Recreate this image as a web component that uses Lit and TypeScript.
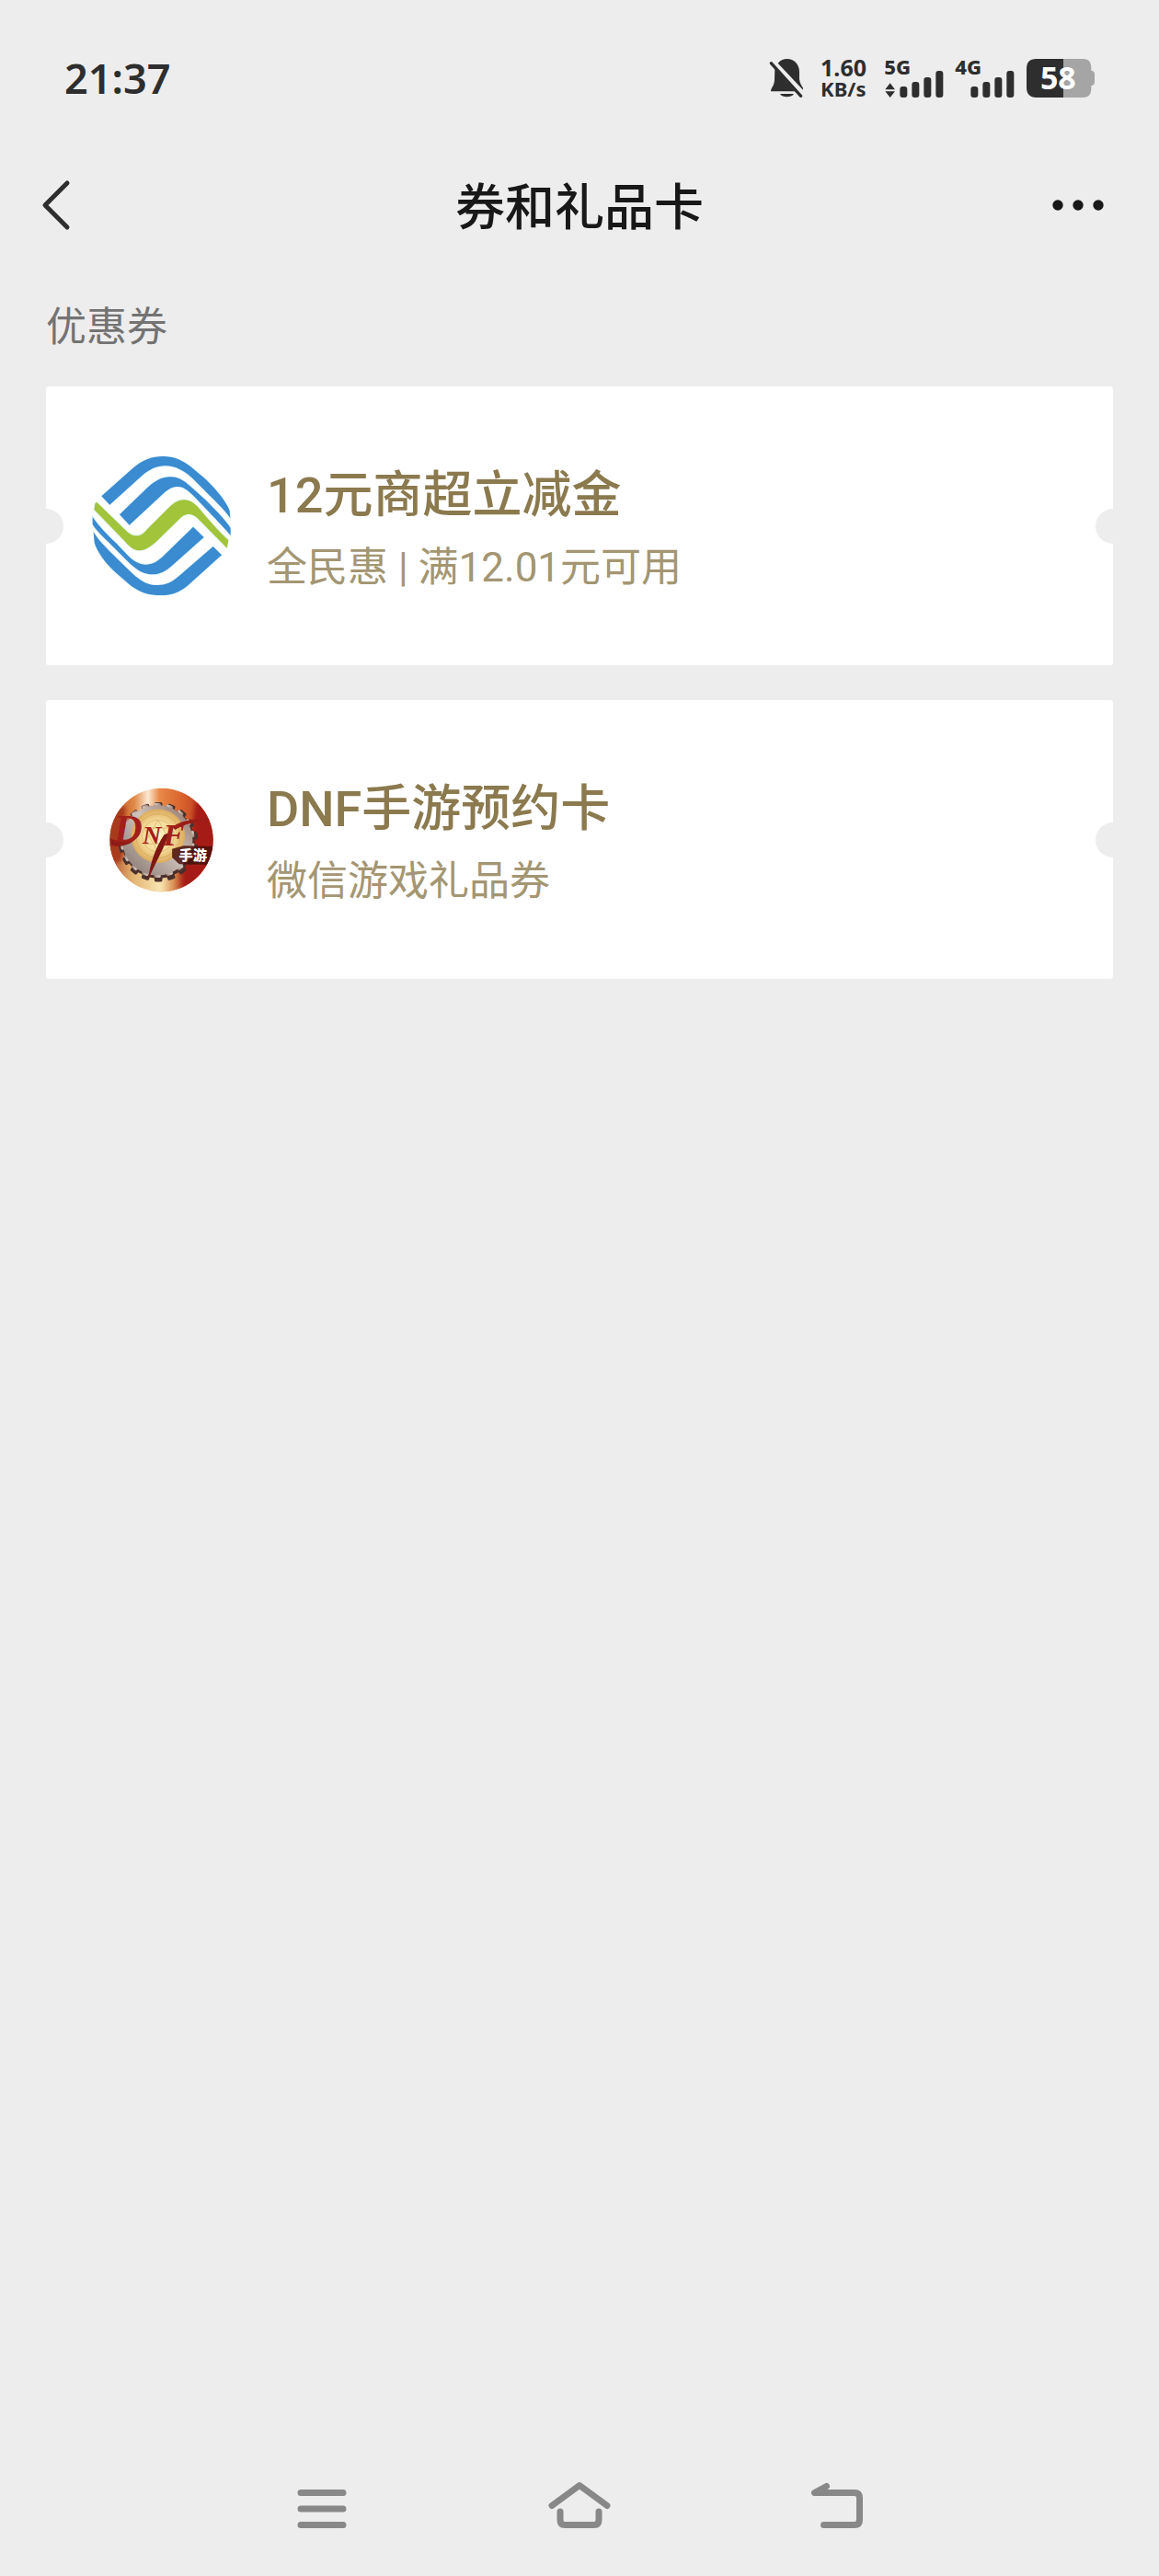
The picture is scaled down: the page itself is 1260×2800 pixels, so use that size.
import { LitElement, html, svg, css, type TemplateResult } from "lit";
import { customElement, property } from "lit/decorators.js";

interface Coupon {
  title: string;
  detail: string;
  logo: TemplateResult;
}

const chinaMobileLogo = html`
  <svg class="logo logo-large" viewBox="60 78 453 453" role="img" aria-label="中国移动">
    <g class="halo">
      <path fill="#3a8bd0" d="M91 208 L192 118 C225 88 258 78 292 78 C326 78 352 88 385 114 L432 154 C468 188 502 232 509 256 L511 280 C492 252 462 224 430 192 L388 150 C358 122 330 109 300 109 C270 109 248 120 224 140 L118 236Z"/>
      <path fill="#3a8bd0" d="M150 268 L240 181 C268 155 290 145 315 145 C340 145 358 155 380 175 L430 220 C462 252 498 288 512 312 L512 336 C496 316 470 290 440 258 L392 208 C370 186 356 177 340 177 C322 177 310 184 292 200 L182 302Z"/>
      <path fill="#a2c43a" d="M76 228 L165 314 C180 330 192 337 206 337 C220 337 228 330 240 316 L312 244 C332 224 348 219 362 220 C380 221 392 230 406 244 C440 284 470 320 505 352 L500 377 L418 294 C402 276 390 267 376 267 C362 267 352 275 342 286 L272 354 C250 375 232 385 214 385 C196 385 182 372 166 354 L67 252 L70 232Z"/>
      <path fill="#3a8bd0" d="M62 275 C80 302 108 332 140 362 L172 396 C194 420 214 431 236 431 C256 431 270 424 290 406 L390 308 L425 342 L324 432 C300 454 280 463 258 463 C230 463 210 452 182 426 L116 360 C94 338 74 320 62 300Z"/>
      <path fill="#3a8bd0" d="M65 325 C84 356 110 380 142 412 L190 458 C222 488 244 498 274 498 C300 498 318 490 344 468 L455 372 L483 400 L374 498 C344 524 318 531 288 531 C244 531 214 522 180 494 L132 452 C104 426 78 392 68 360Z"/>
    </g>
  </svg>`;

const teeth = Array.from({ length: 18 }, (_, i) => i * 20);

const dnfLogo = html`
  <svg class="logo logo-small" viewBox="57 48 340 342" role="img" aria-label="DNF手游">
    <defs>
      <clipPath id="disc"><circle cx="227" cy="219" r="169"/></clipPath>
      <linearGradient id="sky" x1="0" y1="0" x2="1" y2="0">
        <stop offset="0" stop-color="#b84a1c"/>
        <stop offset=".24" stop-color="#e08a48"/>
        <stop offset=".37" stop-color="#fbe9d2"/>
        <stop offset=".48" stop-color="#e88a48"/>
        <stop offset=".7" stop-color="#d9622c"/>
        <stop offset="1" stop-color="#a82a1a"/>
      </linearGradient>
      <linearGradient id="ground" x1="0" y1="0" x2="1" y2="0">
        <stop offset="0" stop-color="#a8341a"/>
        <stop offset=".25" stop-color="#e2b470"/>
        <stop offset=".5" stop-color="#f8e6b4"/>
        <stop offset=".62" stop-color="#d88a4c"/>
        <stop offset=".7" stop-color="#a81c14"/>
        <stop offset="1" stop-color="#8c1812"/>
      </linearGradient>
      <radialGradient id="gold">
        <stop offset="0" stop-color="#fff4c4"/>
        <stop offset=".6" stop-color="#f3d896"/>
        <stop offset="1" stop-color="#dcab5c"/>
      </radialGradient>
      <linearGradient id="steel" x1="1" y1="0" x2="0" y2="1">
        <stop offset="0" stop-color="#8d6c60"/>
        <stop offset=".45" stop-color="#cfc4bc"/>
        <stop offset="1" stop-color="#82706a"/>
      </linearGradient>
      <filter id="soft"><feGaussianBlur stdDeviation="7"/></filter>
    </defs>
    <g clip-path="url(#disc)">
      <rect x="57" y="48" width="340" height="342" fill="url(#sky)"/>
      <g filter="url(#soft)">
        <rect x="40" y="270" width="370" height="140" fill="url(#ground)"/>
        <path d="M340 90 L410 100 V350 H300 L325 190Z" fill="#a51c15"/>
        <path d="M50 110 L110 110 L100 290 L50 300Z" fill="#a83a1c"/>
      </g>
      <g fill="#4b302b">
        ${teeth.map((a) => svg`<rect x="204" y="96" width="26" height="28" rx="5" transform="rotate(${a} 217 226)"/>`)}
      </g>
      <circle cx="217" cy="226" r="119" fill="#4b302b"/>
      <g fill="url(#steel)">
        ${teeth.map((a) => svg`<rect x="203" y="98" width="22" height="26" rx="5" transform="rotate(${a} 214 220)"/>`)}
        <circle cx="214" cy="220" r="115"/>
      </g>
      <circle cx="216" cy="206" r="88" fill="url(#gold)"/>
      <circle cx="216" cy="206" r="72" fill="none" stroke="#d9ad62" stroke-width="3"/>
      <circle cx="216" cy="206" r="52" fill="none" stroke="#e0ba74" stroke-width="3"/>
      <path d="M216 154 L261 232 H171Z M216 258 L171 180 H261Z" fill="none" stroke="#e0ba74" stroke-width="3"/>
      <path d="M262 248 L300 238 L400 240 V300 L285 298 L262 276Z" fill="#4a0f0c" opacity=".85"/>
      <path d="M60 214 C100 236 144 214 160 174 C160 214 118 250 62 236Z" fill="#8e1b16"/>
      <path d="M262 176 C300 150 345 150 386 148 L380 157 C340 158 300 166 272 186Z" fill="#9c1d17"/>
      <path d="M252 196 C238 244 208 292 184 348 C190 294 208 244 236 202Z" fill="#7f1713"/>
      <text class="brush" x="72" y="226" font-size="128">D</text>
      <text class="brush" x="165" y="230" font-size="84">N</text>
      <text class="brush" x="232" y="236" font-size="104">F</text>
      <text class="game" x="284" y="286" font-size="46">手游</text>
    </g>
  </svg>`;

const coupons: Coupon[] = [
  { title: "12元商超立减金", detail: "全民惠 | 满12.01元可用", logo: chinaMobileLogo },
  { title: "DNF手游预约卡", detail: "微信游戏礼品券", logo: dnfLogo },
];

@customElement("status-bar")
class StatusBar extends LitElement {
  static styles = css`
    :host {
      display: flex;
      align-items: center;
      justify-content: space-between;
      height: 170px;
      padding: 0 70px;
      color: #2e2e2e;
      font-family: "Noto Sans", sans-serif;
    }
    .time { font-size: 45px; font-weight: 600; line-height: 64px; }
    .icons { display: flex; align-items: center; }
    .icons svg { display: block; overflow: visible; fill: currentColor; }
    .speed {
      display: flex;
      flex-direction: column;
      margin: 0 20px 0 18px;
      font-weight: 700;
      line-height: 23px;
    }
    .rate { font-size: 25px; }
    .unit { font-size: 22px; }
    .signal { margin-right: 13px; }
    .network { font-size: 66px; font-weight: 800; }
    .level { font-size: 102px; font-weight: 700; fill: #fff; }
  `;

  private signal(network: string, active: boolean) {
    return svg`
      <svg class="signal" width="64" height="42" viewBox="0 0 192 126" role="img" aria-label="${network}">
        <text class="network" x="-2" y="50">${network}</text>
        ${active ? svg`<path d="M17 79 L33 100 H1Z M1 106 H33 L17 126Z"/>` : null}
        <rect x="49" y="90" width="24" height="36" rx="9"/>
        <rect x="88" y="75" width="24" height="51" rx="9"/>
        <rect x="127" y="60" width="24" height="66" rx="9"/>
        <rect x="166" y="39" width="24" height="87" rx="9"/>
      </svg>`;
  }

  render() {
    return html`
      <span class="time">21:37</span>
      <div class="icons">
        <svg width="38" height="42" viewBox="48 72 114 126" role="img" aria-label="静音">
          <path d="M77 86 C86 76 96 72 107 72 C130 72 147 90 147 114 V138 C148 150 154 158 159 167 V173Z"/>
          <path d="M67 104 L133 178 H54 C54 168 65 160 66 142Z"/>
          <path d="M84 186 H129 C122 199 91 199 84 186Z"/>
          <path d="M55 86 L152 193" fill="none" stroke="currentColor" stroke-width="10" stroke-linecap="round"/>
        </svg>
        <span class="speed"><span class="rate">1.60</span><span class="unit">KB/s</span></span>
        ${this.signal("5G", true)}
        ${this.signal("4G", false)}
        <svg width="74" height="42" viewBox="888 72 222 126" role="img" aria-label="电量 58%">
          <path d="M1008 72 H1072 C1092 72 1099 84 1099 102 V110 C1107 111 1110 115 1110 122 V146 C1110 154 1107 158 1099 159 V168 C1099 186 1092 198 1072 198 H1008Z" fill="#a5a5a5"/>
          <path d="M1008 72 H920 C898 72 888 84 888 104 V166 C888 186 898 198 920 198 H1008Z"/>
          <text class="level" x="991" y="172" text-anchor="middle">58</text>
        </svg>
      </div>
    `;
  }
}

@customElement("coupon-card")
class CouponCard extends LitElement {
  @property({ attribute: false }) coupon!: Coupon;

  static styles = css`
    :host { display: block; }
    .card {
      position: relative;
      display: grid;
      grid-template-columns: 151px 1fr;
      align-items: center;
      column-gap: 39px;
      min-height: 303px;
      padding: 0 50px;
      box-sizing: border-box;
      overflow: hidden;
      border-radius: 3px;
      background: #fff;
      color: #8b7a4e;
      text-decoration: none;
    }
    .card::before,
    .card::after {
      content: "";
      position: absolute;
      top: 50%;
      width: 38px;
      height: 38px;
      border-radius: 50%;
      background: #ededed;
      transform: translateY(-50%);
    }
    .card::before { left: -19px; }
    .card::after { right: -19px; }
    .logo { display: block; justify-self: center; overflow: visible; }
    .logo-large { width: 151px; height: 151px; }
    .logo-small { width: 113px; height: 114px; }
    .halo path { stroke: #e9faff; stroke-width: 6; paint-order: stroke; }
    .brush {
      fill: #a3201a;
      font-family: "Liberation Serif", serif;
      font-style: italic;
      font-weight: 700;
    }
    .game {
      fill: #fff;
      font-family: "Noto Sans CJK SC", sans-serif;
      font-weight: 900;
    }
    .text { padding-top: 10px; }
    .title {
      margin: 0;
      font-size: 54px;
      font-weight: 500;
      line-height: 80px;
    }
    .detail {
      margin: 0;
      color: #a39672;
      font-size: 44px;
      line-height: 76px;
    }
  `;

  render() {
    const { title, detail, logo } = this.coupon;
    return html`
      <a class="card" href="#">
        ${logo}
        <div class="text">
          <h3 class="title">${title}</h3>
          <p class="detail">${detail}</p>
        </div>
      </a>
    `;
  }
}

@customElement("app-root")
class AppRoot extends LitElement {
  static styles = css`
    :host {
      display: flex;
      flex-direction: column;
      min-height: 100vh;
      background: #ededed;
      color: #181818;
      font-family: Roboto, "Noto Sans CJK SC", sans-serif;
    }
    button {
      display: grid;
      place-items: center;
      padding: 0;
      border: 0;
      background: none;
      color: inherit;
    }
    button svg { display: block; }
    .nav {
      display: grid;
      grid-template-columns: 176px 1fr 176px;
      align-items: center;
      height: 106px;
    }
    .nav button { height: 106px; }
    .back { width: 122px; }
    .nav-title {
      margin: 0;
      padding-top: 8px;
      font-size: 54px;
      font-weight: 500;
      line-height: 80px;
      text-align: center;
    }
    .content { flex: 1; padding: 0 50px; }
    .section-title {
      margin: 0;
      padding: 50px 0 34px;
      color: #737373;
      font-size: 44px;
      font-weight: 400;
      line-height: 60px;
    }
    .list {
      display: grid;
      gap: 38px;
      margin: 0;
      padding: 0;
      list-style: none;
    }
    .system {
      display: grid;
      grid-template-columns: repeat(3, 280px);
      justify-content: center;
      height: 146px;
      color: #888;
    }
    .system svg {
      fill: none;
      stroke: currentColor;
      stroke-width: 7;
      stroke-linecap: round;
      stroke-linejoin: round;
    }
  `;

  render() {
    return html`
      <status-bar></status-bar>
      <header class="nav">
        <button class="back" type="button" aria-label="返回">
          <svg width="32" height="56" viewBox="0 0 32 56" fill="none" stroke="#2e2e2e" stroke-width="5" stroke-linecap="round" stroke-linejoin="round">
            <path d="M28 4 L4 28 L28 52"/>
          </svg>
        </button>
        <h1 class="nav-title">券和礼品卡</h1>
        <button type="button" aria-label="更多">
          <svg width="58" height="12" viewBox="0 0 58 12" fill="#181818">
            <circle cx="7" cy="6" r="5.7"/><circle cx="29" cy="6" r="5.7"/><circle cx="51" cy="6" r="5.7"/>
          </svg>
        </button>
      </header>
      <main class="content">
        <h2 class="section-title">优惠券</h2>
        <ul class="list">
          ${coupons.map((c) => html`<li><coupon-card .coupon=${c}></coupon-card></li>`)}
        </ul>
      </main>
      <footer class="system">
        <button type="button" aria-label="最近任务">
          <svg width="68" height="60" viewBox="0 0 68 60">
            <path d="M11 12.5 H57 M11 30 H57 M11 47.500 H57"/>
          </svg>
        </button>
        <button type="button" aria-label="主页">
          <svg width="68" height="60" viewBox="0 0 68 60">
            <path d="M4 26.500 L34 4.500 L64 26.500"/>
            <path d="M13 33 V42 Q13 47.500 18 47.500 H50 Q55 47.500 55 42 V33"/>
          </svg>
        </button>
        <button type="button" aria-label="返回上一页">
          <svg width="68" height="60" viewBox="0 0 68 60">
            <path d="M22.500 5.500 L9.500 12.500 H53 Q58.500 12.500 58.500 18 V42 Q58.500 47.500 53 47.500 H19.500"/>
          </svg>
        </button>
      </footer>
    `;
  }
}
